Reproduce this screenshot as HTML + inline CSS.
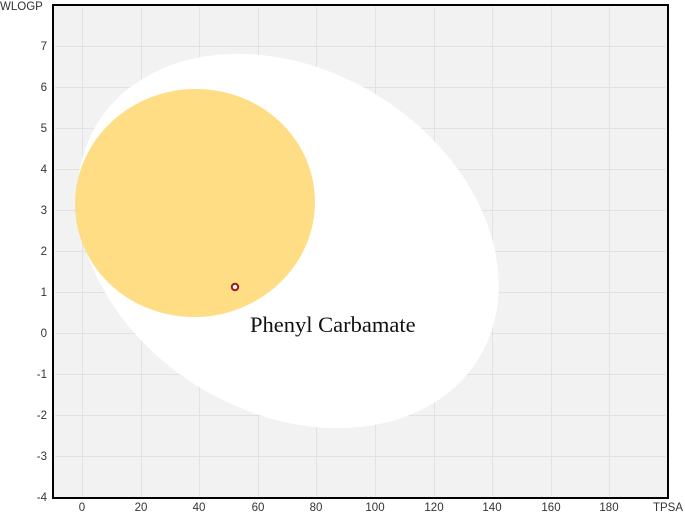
<!DOCTYPE html>
<html><head><style>body{margin:0;background:#fff}svg{display:block}</style></head><body>
<svg width="685" height="513" xmlns="http://www.w3.org/2000/svg" font-family="Liberation Sans, Arial, sans-serif">
<rect x="54" y="6" width="613" height="491" fill="#f2f2f2"/>
<g stroke="#e2e2e2" stroke-width="1">
<line x1="55" y1="46.5" x2="666" y2="46.5"/><line x1="55" y1="87.5" x2="666" y2="87.5"/><line x1="55" y1="128.5" x2="666" y2="128.5"/><line x1="55" y1="169.5" x2="666" y2="169.5"/><line x1="55" y1="210.5" x2="666" y2="210.5"/><line x1="55" y1="251.5" x2="666" y2="251.5"/><line x1="55" y1="292.5" x2="666" y2="292.5"/><line x1="55" y1="333.5" x2="666" y2="333.5"/><line x1="55" y1="374.5" x2="666" y2="374.5"/><line x1="55" y1="415.5" x2="666" y2="415.5"/><line x1="55" y1="456.5" x2="666" y2="456.5"/>
<line x1="82.5" y1="7" x2="82.5" y2="496"/><line x1="141.5" y1="7" x2="141.5" y2="496"/><line x1="199.5" y1="7" x2="199.5" y2="496"/><line x1="258.5" y1="7" x2="258.5" y2="496"/><line x1="316.5" y1="7" x2="316.5" y2="496"/><line x1="375.5" y1="7" x2="375.5" y2="496"/><line x1="434.5" y1="7" x2="434.5" y2="496"/><line x1="492.5" y1="7" x2="492.5" y2="496"/><line x1="551.5" y1="7" x2="551.5" y2="496"/><line x1="609.5" y1="7" x2="609.5" y2="496"/>
</g>
<ellipse cx="288" cy="241" rx="224" ry="171" transform="rotate(31.7 288 241)" fill="#fff"/>
<ellipse cx="195" cy="203" rx="120" ry="114" transform="rotate(-5 195 203)" fill="#ffd978" opacity="0.9"/>
<circle cx="235" cy="287" r="3.2" fill="#fff" stroke="#9b1b1b" stroke-width="2"/>
<text x="250" y="332" font-family="Liberation Serif, serif" font-size="22.5" fill="#111">Phenyl Carbamate</text>
<rect x="53" y="5" width="615" height="493" fill="none" stroke="#000" stroke-width="2"/>
<g font-size="11.5" fill="#333" text-anchor="end">
<text x="47" y="50">7</text><text x="47" y="91">6</text><text x="47" y="132">5</text><text x="47" y="173">4</text><text x="47" y="214">3</text><text x="47" y="255">2</text><text x="47" y="296">1</text><text x="47" y="337">0</text><text x="47" y="378">-1</text><text x="47" y="419">-2</text><text x="47" y="460">-3</text><text x="47" y="501">-4</text>
</g>
<text x="0" y="10" font-size="11.5" fill="#333">WLOGP</text>
<g font-size="11.5" fill="#333" text-anchor="middle">
<text x="82" y="511">0</text><text x="141" y="511">20</text><text x="199" y="511">40</text><text x="258" y="511">60</text><text x="316" y="511">80</text><text x="375" y="511">100</text><text x="434" y="511">120</text><text x="492" y="511">140</text><text x="551" y="511">160</text><text x="609" y="511">180</text><text x="668" y="511">TPSA</text>
</g>
</svg>
</body></html>
